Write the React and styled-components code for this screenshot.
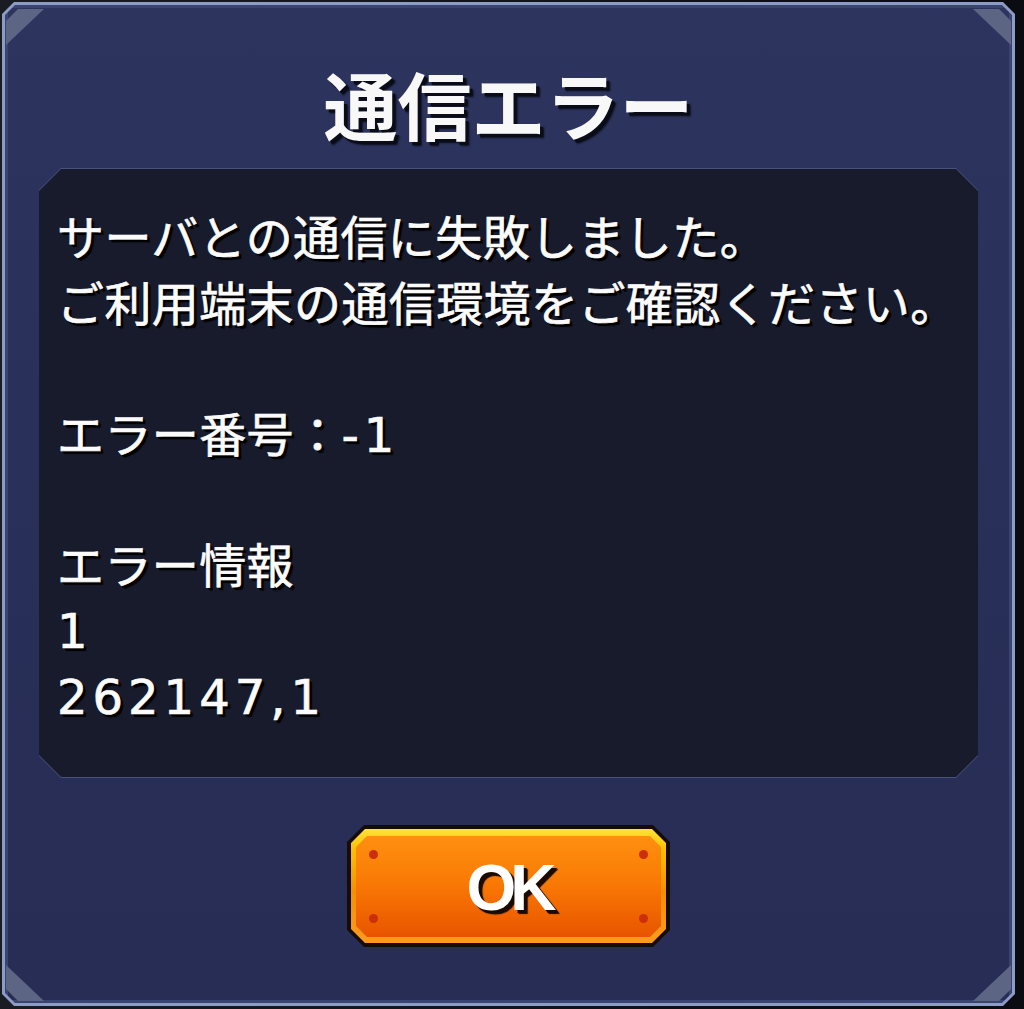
import React from 'react'
import styled, { createGlobalStyle } from 'styled-components'

const GlobalStyle = createGlobalStyle`
  html, body {
    margin: 0;
    padding: 0;
    background: #0b0c12;
  }
  #root {
    width: 1024px;
    height: 1009px;
  }
`

const chamfer = (s) => `polygon(
  ${s}px 0, calc(100% - ${s}px) 0, 100% ${s}px, 100% calc(100% - ${s}px),
  calc(100% - ${s}px) 100%, ${s}px 100%, 0 calc(100% - ${s}px), 0 ${s}px
)`

const Screen = styled.div`
  width: 1024px;
  height: 1009px;
  padding: 2px 9px 3px 2px;
  box-sizing: border-box;
  background: linear-gradient(90deg, #1a1c24 0%, #0b0c12 100%);
  font-family: 'Noto Sans CJK JP', 'Noto Sans', sans-serif;
`

const Frame = styled.div`
  position: relative;
  height: 100%;
  padding: 3px;
  box-sizing: border-box;
  background: #8d9cc4;
  clip-path: ${chamfer(12)};
`

const Fill = styled.div`
  height: 100%;
  box-sizing: border-box;
  padding: 58px 31px 0 31px;
  display: flex;
  flex-direction: column;
  align-items: center;
  background: linear-gradient(180deg, #2d355f 0%, #293059 40%, #272d55 100%);
  border: 3px solid #3a4470;
  clip-path: ${chamfer(10)};
`

const Corner = styled.div`
  position: absolute;
  width: 38px;
  height: 36px;
  background: #5c6584;
  ${({ $pos }) => {
    switch ($pos) {
      case 'tl':
        return 'top: 7px; left: 4px; clip-path: polygon(0 12px, 12px 0, 100% 0, 0 100%);'
      case 'tr':
        return 'top: 7px; right: 4px; clip-path: polygon(0 0, calc(100% - 12px) 0, 100% 12px, 100% 100%);'
      case 'bl':
        return 'bottom: 5px; left: 4px; clip-path: polygon(0 0, 100% 100%, 12px 100%, 0 calc(100% - 12px));'
      default:
        return 'bottom: 5px; right: 4px; clip-path: polygon(100% 0, 100% calc(100% - 12px), calc(100% - 12px) 100%, 0 100%);'
    }
  }}
`

const Title = styled.h1`
  margin: 0;
  font-size: 74px;
  line-height: 74px;
  font-weight: 700;
  color: #f8f8f8;
  text-shadow: 4px 4px 2px #0a0c18, 3px 3px 0 #0a0c18;
`

const MessageBox = styled.div`
  margin-top: 28px;
  align-self: stretch;
  height: 610px;
  box-sizing: border-box;
  padding: 1px 0 0 0;
  background: #4a527c;
  clip-path: ${chamfer(22)};
`

const MessageInner = styled.div`
  height: 608px;
  box-sizing: border-box;
  padding: 33px 18px 0 18px;
  background: #181b2c;
  clip-path: ${chamfer(22)};
`

const Line = styled.div`
  font-size: 47px;
  line-height: 65.5px;
  height: 65.5px;
  font-weight: 400;
  color: #fbfbfb;
  white-space: nowrap;
  letter-spacing: 0.4px;
  -webkit-text-stroke: 0.7px #fbfbfb;
  text-shadow: 3px 3px 1px #000000, 2px 2px 0 #000000;
`

const Num = styled.span`
  font-family: 'DejaVu Sans', 'Noto Sans CJK JP', sans-serif;
  font-size: 48px;
  letter-spacing: 5px;
`

const ButtonOuter = styled.button`
  margin-top: 47px;
  width: 323px;
  height: 122px;
  padding: 4px;
  border: none;
  background: #150c05;
  clip-path: ${chamfer(17)};
  cursor: pointer;
  font-family: inherit;
`

const ButtonBevel = styled.div`
  height: 100%;
  padding: 7px 5px 6px 5px;
  box-sizing: border-box;
  background: linear-gradient(180deg, #ffe23a 0%, #ffc000 18%, #f49000 55%, #ff9a20 100%);
  clip-path: ${chamfer(14)};
`

const ButtonFace = styled.div`
  position: relative;
  height: 100%;
  display: flex;
  align-items: center;
  justify-content: center;
  background: linear-gradient(180deg, #ff9010 0%, #f97a05 45%, #ef6200 80%, #e85400 100%);
  clip-path: ${chamfer(11)};
`

const Rivet = styled.span`
  position: absolute;
  width: 9px;
  height: 9px;
  border-radius: 50%;
  background: #cc2e08;
  ${({ $v }) => ($v === 't' ? 'top: 14px;' : 'bottom: 14px;')}
  ${({ $h }) => ($h === 'l' ? 'left: 13px;' : 'right: 13px;')}
`

const ButtonLabel = styled.span`
  font-family: 'Liberation Sans', Arial, sans-serif;
  font-size: 64px;
  font-weight: 700;
  letter-spacing: -6px;
  color: #ffffff;
  margin-top: 2px;
  text-shadow: 4px 4px 1px #1a0a00, 3px 3px 0 #1a0a00;
`

const lines = [
  ['サーバとの通信に失敗しました。'],
  ['ご利用端末の通信環境をご確認ください。'],
  [''],
  ['エラー番号：', '-1'],
  [''],
  ['エラー情報'],
  ['', '1'],
  ['', '262147,1'],
]

export default function App() {
  return (
    <>
      <GlobalStyle />
      <Screen>
        <Frame>
          <Fill>
            <Title>通信エラー</Title>
            <MessageBox>
              <MessageInner>
                {lines.map(([text, num], i) => (
                  <Line key={i}>
                    {text}
                    {num && <Num>{num}</Num>}
                  </Line>
                ))}
              </MessageInner>
            </MessageBox>
            <ButtonOuter>
              <ButtonBevel>
                <ButtonFace>
                  <Rivet $v="t" $h="l" />
                  <Rivet $v="t" $h="r" />
                  <Rivet $v="b" $h="l" />
                  <Rivet $v="b" $h="r" />
                  <ButtonLabel>OK</ButtonLabel>
                </ButtonFace>
              </ButtonBevel>
            </ButtonOuter>
          </Fill>
          <Corner $pos="tl" />
          <Corner $pos="tr" />
          <Corner $pos="bl" />
          <Corner $pos="br" />
        </Frame>
      </Screen>
    </>
  )
}
